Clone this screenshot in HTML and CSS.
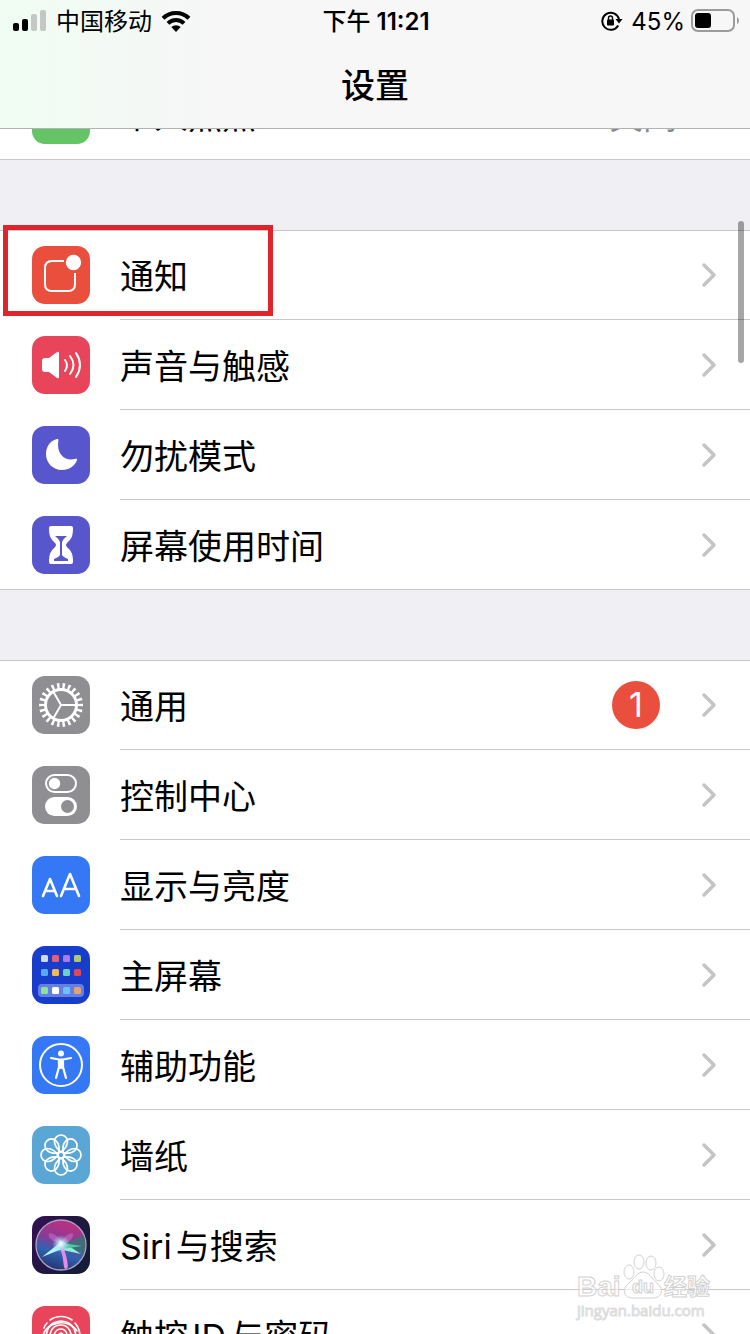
FILE: index.html
```html
<!DOCTYPE html>
<html lang="zh-CN">

<head>
    <meta charset="UTF-8">
    <meta name="viewport" content="width=device-width, initial-scale=1.0">
    <title>设置</title>
    <link rel="stylesheet" href="styles.css">
</head>

<body>
    <svg class="defs" aria-hidden="true">
        <symbol id="chevron" viewBox="0 0 16 26">
            <path d="M3 3l10 10L3 23" fill="none" stroke="#c4c4c6" stroke-width="3.500" stroke-linecap="round" stroke-linejoin="round"/>
        </symbol>
        <linearGradient id="siri-ball" x1="0.6" y1="0" x2="0.3" y2="1">
            <stop offset="0" stop-color="#c0307e"/>
            <stop offset="0.4" stop-color="#8a3a94"/>
            <stop offset="0.65" stop-color="#2f62b0"/>
            <stop offset="1" stop-color="#27306f"/>
        </linearGradient>
        <linearGradient id="siri-bg" x1="0" y1="0" x2="1" y2="0.6">
            <stop offset="0" stop-color="#351052"/>
            <stop offset="1" stop-color="#141c38"/>
        </linearGradient>
        <radialGradient id="siri-glow">
            <stop offset="0" stop-color="#fff"/>
            <stop offset="0.4" stop-color="#c9f0ff" stop-opacity="0.7"/>
            <stop offset="1" stop-color="#8fd8ff" stop-opacity="0"/>
        </radialGradient>
    </svg>

    <div class="screen">
        <header class="header">
            <div class="status-bar">
                <div class="status-left">
                    <svg width="34" height="22" viewBox="0 0 34 22">
                        <rect x="0" y="13" width="6" height="8" rx="2"/>
                        <rect x="9" y="9" width="6" height="12" rx="2"/>
                        <rect x="18" y="4" width="6" height="17" rx="2" fill="#c3c8c4"/>
                        <rect x="27" y="0" width="6" height="21" rx="2" fill="#c3c8c4"/>
                    </svg>
                    <span class="carrier">中国移动</span>
                    <svg width="30" height="22" viewBox="0 0 30 22">
                        <g fill="none" stroke="#000" stroke-width="4">
                            <path d="M2 8.2a18.6 18.6 0 0 1 26 0"/>
                            <path d="M7 13.4a11.4 11.4 0 0 1 16 0"/>
                        </g>
                        <path d="M15 22l-4.7-4.9a6.8 6.8 0 0 1 9.4 0z"/>
                    </svg>
                </div>
                <span class="time"><span class="period">下午</span> 11:21</span>
                <div class="status-right">
                    <svg width="22" height="20" viewBox="0 0 22 20">
                        <path d="M17.2 14.5A8.5 8.5 0 1 1 18 8" fill="none" stroke="#000" stroke-width="2"/>
                        <path d="M14.5 8h7l-3.5 4.5z"/>
                        <rect x="6" y="8.5" width="7" height="6" rx="1"/>
                        <path d="M7.5 9V7a2 2 0 0 1 4 0v2" fill="none" stroke="#000" stroke-width="1.4"/>
                    </svg>
                    <span class="percent">45%</span>
                    <svg width="48" height="24" viewBox="0 0 48 24">
                        <rect x="1" y="1" width="42" height="21" rx="6" fill="none" stroke="#9b9b9b" stroke-width="2"/>
                        <rect x="4" y="4" width="16" height="15" rx="3"/>
                        <path d="M46 8q2 1 2 3.500t-2 3.500z" fill="#9b9b9b"/>
                    </svg>
                </div>
            </div>
            <h1>设置</h1>
        </header>

        <main>
            <nav class="group">
                <a class="row" href="#">
                    <svg class="icon" viewBox="0 0 58 58"><rect width="58" height="58" rx="13" fill="#65c466"/></svg>
                    <span class="row-body">
                        <span class="label">个人热点</span>
                        <span class="value">关闭</span>
                        <svg class="chevron"><use href="#chevron"/></svg>
                    </span>
                </a>
            </nav>

            <nav class="group">
                <a class="row marked" href="#">
                    <svg class="icon" viewBox="0 0 58 58">
                        <rect width="58" height="58" rx="13" fill="#ea4e3d"/>
                        <path d="M32 15H20q-7 0-7 7v16q0 7 7 7h16q7 0 7-7V27" fill="none" stroke="#fff" stroke-width="2"/>
                        <circle cx="41.500" cy="16.500" r="7.700" fill="#fff"/>
                    </svg>
                    <span class="row-body">
                        <span class="label">通知</span>
                        <svg class="chevron"><use href="#chevron"/></svg>
                    </span>
                </a>
                <a class="row" href="#">
                    <svg class="icon" viewBox="0 0 58 58">
                        <rect width="58" height="58" rx="13" fill="#e8445a"/>
                        <path d="M10 25q0-3 3-3h4l8-6q2-1 2 1v24q0 2-2 1l-8-6h-4q-3 0-3-3z" fill="#fff"/>
                        <g fill="none" stroke="#fff" stroke-width="2" stroke-linecap="round">
                            <path d="M33 24q4 5 0 11"/>
                            <path d="M38 20q7 9 0 18"/>
                            <path d="M44 17q8 12 0 24"/>
                        </g>
                    </svg>
                    <span class="row-body">
                        <span class="label">声音与触感</span>
                        <svg class="chevron"><use href="#chevron"/></svg>
                    </span>
                </a>
                <a class="row" href="#">
                    <svg class="icon" viewBox="0 0 58 58">
                        <rect width="58" height="58" rx="13" fill="#5856cc"/>
                        <path d="M25 13C17 15 14 22 14 28c0 9 7 16 16 16 7 0 13-4 15-10 .4-1-.4-1.600-1.400-1.200C34 36 24 29 26.400 14.500c.2-1.200-.4-1.700-1.400-1.500z" fill="#fff"/>
                    </svg>
                    <span class="row-body">
                        <span class="label">勿扰模式</span>
                        <svg class="chevron"><use href="#chevron"/></svg>
                    </span>
                </a>
                <a class="row" href="#">
                    <svg class="icon" viewBox="0 0 58 58">
                        <rect width="58" height="58" rx="13" fill="#5856cc"/>
                        <path d="M19 10h20q2 0 2 2c0 9-2 11-6 15q-2 2 0 4c4 4 6 6 6 15q0 2-2 2H19q-2 0-2-2c0-9 2-11 6-15q2-2 0-4c-4-4-6-6-6-15q0-2 2-2z" fill="#fff"/>
                        <path d="M23 20h12q-4 3-5 6v13q1 2 6 4v2H22v-2q5-2 6-4V26q-1-3-5-6z" fill="#5856cc"/>
                    </svg>
                    <span class="row-body">
                        <span class="label">屏幕使用时间</span>
                        <svg class="chevron"><use href="#chevron"/></svg>
                    </span>
                </a>
            </nav>

            <nav class="group">
                <a class="row" href="#">
                    <svg class="icon" viewBox="0 0 58 58">
                        <rect width="58" height="58" rx="13" fill="#8e8e93"/>
                        <g fill="none" stroke="#fff">
                            <circle cx="29" cy="29" r="19" stroke-width="6" pathLength="88" stroke-dasharray="1.800 2.200" stroke-dashoffset="0.900"/>
                            <circle cx="29" cy="29" r="15.500" stroke-width="3"/>
                            <path d="M29 29h15M29 29l-7.500-13M29 29l-7.500 13" stroke-width="2"/>
                        </g>
                    </svg>
                    <span class="row-body">
                        <span class="label">通用</span>
                        <span class="badge">1</span>
                        <svg class="chevron"><use href="#chevron"/></svg>
                    </span>
                </a>
                <a class="row" href="#">
                    <svg class="icon" viewBox="0 0 58 58">
                        <rect width="58" height="58" rx="13" fill="#8e8e93"/>
                        <rect x="14" y="9" width="30" height="17" rx="8.500" fill="none" stroke="#fff" stroke-width="2"/>
                        <circle cx="22.500" cy="17.500" r="5.700" fill="#fff"/>
                        <rect x="13" y="31" width="32" height="19" rx="9.500" fill="#fff"/>
                        <circle cx="35.500" cy="40.500" r="6.500" fill="#8e8e93"/>
                    </svg>
                    <span class="row-body">
                        <span class="label">控制中心</span>
                        <svg class="chevron"><use href="#chevron"/></svg>
                    </span>
                </a>
                <a class="row" href="#">
                    <svg class="icon" viewBox="0 0 58 58">
                        <rect width="58" height="58" rx="13" fill="#3478f6"/>
                        <g fill="none" stroke="#fff" stroke-width="2.600" stroke-linecap="round" stroke-linejoin="round">
                            <path d="M11 40l7-17 7 17M13.500 35h9"/>
                            <path d="M29 40l9-22 9 22M32 33h12"/>
                        </g>
                    </svg>
                    <span class="row-body">
                        <span class="label">显示与亮度</span>
                        <svg class="chevron"><use href="#chevron"/></svg>
                    </span>
                </a>
                <a class="row" href="#">
                    <svg class="icon" viewBox="0 0 58 58">
                        <rect width="58" height="58" rx="13" fill="#183dcc"/>
                        <rect x="6" y="38" width="46" height="13" rx="4" fill="#6580e0"/>
                        <rect x="9" y="9" width="7" height="7" rx="1.500" fill="#cfd9ea"/>
                        <rect x="20" y="9" width="7" height="7" rx="1.500" fill="#e0607f"/>
                        <rect x="31" y="9" width="7" height="7" rx="1.500" fill="#a67bf5"/>
                        <rect x="42" y="9" width="7" height="7" rx="1.500" fill="#adc77a"/>
                        <rect x="9" y="23" width="7" height="7" rx="1.500" fill="#58a9f5"/>
                        <rect x="20" y="23" width="7" height="7" rx="1.500" fill="#f0b95c"/>
                        <rect x="31" y="23" width="7" height="7" rx="1.500" fill="#6fcfc4"/>
                        <rect x="42" y="23" width="7" height="7" rx="1.500" fill="#d9485c"/>
                        <rect x="9" y="41" width="7" height="7" rx="1.500" fill="#8de29b"/>
                        <rect x="20" y="41" width="7" height="7" rx="1.500" fill="#fff"/>
                        <rect x="31" y="41" width="7" height="7" rx="1.500" fill="#6dc1fa"/>
                        <rect x="42" y="41" width="7" height="7" rx="1.500" fill="#e2a273"/>
                    </svg>
                    <span class="row-body">
                        <span class="label">主屏幕</span>
                        <svg class="chevron"><use href="#chevron"/></svg>
                    </span>
                </a>
                <a class="row" href="#">
                    <svg class="icon" viewBox="0 0 58 58">
                        <rect width="58" height="58" rx="13" fill="#3478f6"/>
                        <circle cx="29" cy="29" r="21" fill="none" stroke="#fff" stroke-width="2"/>
                        <circle cx="29" cy="17.500" r="3" fill="#fff"/>
                        <g fill="none" stroke="#fff" stroke-width="2.200" stroke-linecap="round" stroke-linejoin="round">
                            <path d="M19 22l8 1.500h4l8-1.500"/>
                            <path d="M27 24v7l-3 11M31 24v7l3 11"/>
                        </g>
                        <path d="M26 23h6v9l-3 1-3-1z" fill="#fff"/>
                    </svg>
                    <span class="row-body">
                        <span class="label">辅助功能</span>
                        <svg class="chevron"><use href="#chevron"/></svg>
                    </span>
                </a>
                <a class="row" href="#">
                    <svg class="icon" viewBox="0 0 58 58">
                        <rect width="58" height="58" rx="13" fill="#5aa7d6"/>
                        <g fill="none" stroke="#fff" stroke-width="1.700">
                            <path id="petal" d="M29 26c-4-3-6.500-7-6.500-10.500a6.500 6.500 0 0 1 13 0c0 3.500-2.500 7.500-6.500 10.500z"/>
                            <use href="#petal" transform="rotate(45 29 29)"/>
                            <use href="#petal" transform="rotate(90 29 29)"/>
                            <use href="#petal" transform="rotate(135 29 29)"/>
                            <use href="#petal" transform="rotate(180 29 29)"/>
                            <use href="#petal" transform="rotate(225 29 29)"/>
                            <use href="#petal" transform="rotate(270 29 29)"/>
                            <use href="#petal" transform="rotate(315 29 29)"/>
                            <circle cx="29" cy="29" r="3.200"/>
                        </g>
                    </svg>
                    <span class="row-body">
                        <span class="label">墙纸</span>
                        <svg class="chevron"><use href="#chevron"/></svg>
                    </span>
                </a>
                <a class="row" href="#">
                    <svg class="icon" viewBox="0 0 58 58">
                        <rect width="58" height="58" rx="13" fill="url(#siri-bg)"/>
                        <circle cx="29" cy="29" r="25" fill="url(#siri-ball)" stroke="#a9a3c4" stroke-width="1.300"/>
                        <path d="M30 29l22-10q3 10-1 20z" fill="#25806f" opacity="0.700"/>
                        <path d="M28 27Q15 24 17 17q8 0 13 10 2-9 11-10 1 8-11 12z" fill="#c06fc8" opacity="0.600"/>
                        <path d="M30 25L10 41l20-8z" fill="#b4f3f7"/>
                        <path d="M28 24l21 14-23-5z" fill="#8cf0d2"/>
                        <path d="M30 27l20 3-20 3z" fill="#4fc9a4"/>
                        <path d="M29 26q6 12 7 25-3 4-4 0-1-11-4-20z" fill="#e48be4"/>
                        <circle cx="29" cy="28" r="9" fill="url(#siri-glow)"/>
                    </svg>
                    <span class="row-body">
                        <span class="label">Siri与搜索</span>
                        <svg class="chevron"><use href="#chevron"/></svg>
                    </span>
                </a>
                <a class="row" href="#">
                    <svg class="icon" viewBox="0 0 58 58">
                        <rect width="58" height="58" rx="13" fill="#e8445a"/>
                        <g fill="none" stroke="#fff" stroke-width="1.600" stroke-linecap="round">
                            <path d="M18 14a19 19 0 0 1 22 0"/>
                            <path d="M12 22q1-3 3-5M43 17q5 6 5 13"/>
                            <path d="M11 31a18 15 0 0 1 34-6"/>
                            <path d="M14 36q-1-20 15-21 15 1 15 18"/>
                            <path d="M18 38q-2-19 11-19 11 0 11 18"/>
                            <path d="M22 40q-2-17 7-17 8 0 7 18"/>
                            <path d="M26 41q-1-14 3-14 4 0 3 15"/>
                        </g>
                    </svg>
                    <span class="row-body">
                        <span class="label">触控ID与密码</span>
                        <svg class="chevron"><use href="#chevron"/></svg>
                    </span>
                </a>
            </nav>
        </main>

        <div class="scrollbar"></div>

        <svg class="watermark" width="140" height="72" viewBox="0 0 140 72">
            <g fill="#fff" fill-opacity="0.600" stroke="#d2d2d2">
                <ellipse cx="56" cy="22" rx="5" ry="7"/>
                <ellipse cx="66" cy="12" rx="5" ry="7"/>
                <ellipse cx="78" cy="13" rx="5" ry="7"/>
                <ellipse cx="86" cy="24" rx="5" ry="7"/>
                <path d="M70 22c6 0 8 6 14 11 8 7 4 15-4 15H60c-9 0-12-8-4-15 6-5 8-11 14-11z"/>
                <text class="wm-name" x="4" y="46">Bai</text>
                <text class="wm-du" x="59" y="43">du</text>
                <text class="wm-cn" x="91" y="45">经验</text>
            </g>
            <text class="wm-url" x="4" y="66">jingyan.baidu.com</text>
        </svg>
    </div>
</body>

</html>
```
FILE: styles.css
```css
*,
*::after {
    box-sizing: border-box;
}

body {
    margin: 0;
    font-family: Inter, "Noto Sans CJK SC", sans-serif;
    text-autospace: normal;
    background-color: #efeff4;
    color: #000;
}

.defs {
    position: absolute;
    width: 0;
    height: 0;
}

.screen {
    position: relative;
    height: 100vh;
    overflow: hidden;
}

/* Header */
.header {
    position: absolute;
    top: 0;
    left: 0;
    right: 0;
    z-index: 2;
    height: 129px;
    background: linear-gradient(to right, #f0fdf3, #f4f8f5 20%, #f7f7f7 32%);
    border-bottom: 1px solid #b2b2b2;
}

.status-bar {
    display: grid;
    grid-template-columns: 1fr auto 1fr;
    align-items: center;
    height: 40px;
    padding: 0 11px 0 13px;
    font-size: 24px;
    line-height: 40px;
}

.status-left,
.status-right {
    display: flex;
    align-items: center;
}

.status-left {
    gap: 9px;
}

.status-right {
    justify-content: flex-end;
    gap: 6px;
}

.carrier,
.percent,
.time {
    padding-top: 2px;
}

.percent {
    margin-left: 2px;
}

.time {
    font-weight: 600;
}

.period {
    font-weight: 500;
}

h1 {
    margin: 0;
    padding-top: 22px;
    font-size: 34px;
    font-weight: 500;
    line-height: 48px;
    text-align: center;
}

/* List */
main {
    padding-top: 70px;
}

.group {
    margin-bottom: 70px;
    background-color: #fff;
    box-shadow: inset 0 1px #c8c7cc, inset 0 -1px #c8c7cc;
}

.row {
    position: relative;
    display: flex;
    height: 90px;
    padding-left: 32px;
    color: inherit;
    text-decoration: none;
}

.icon {
    flex: none;
    width: 58px;
    height: 58px;
    margin: 16px 30px 0 0;
}

.row-body {
    flex: 1;
    display: flex;
    align-items: center;
    padding-right: 33px;
    border-bottom: 1px solid #c8c7cc;
}

.label,
.value {
    padding-top: 4px;
    font-size: 34px;
    line-height: 48px;
}

.label {
    flex: 1;
}

.value {
    margin-right: 24px;
    color: #8a8a8e;
}

.chevron {
    flex: none;
    width: 16px;
    height: 26px;
}

.badge {
    width: 48px;
    height: 48px;
    margin-right: 41px;
    border-radius: 50%;
    background-color: #ea4e3d;
    color: #fff;
    font-size: 34px;
    line-height: 48px;
    text-align: center;
}

.marked::after {
    content: "";
    position: absolute;
    top: -5px;
    left: 3px;
    width: 270px;
    height: 91px;
    border: 5px solid #e0242c;
}

/* Overlays */
.scrollbar {
    position: absolute;
    top: 221px;
    right: 6px;
    width: 6px;
    height: 142px;
    border-radius: 3px;
    background-color: rgba(0, 0, 0, 0.35);
}

.watermark {
    position: absolute;
    right: 37px;
    bottom: 12px;
}

.wm-name {
    font: bold 28px "Liberation Sans", sans-serif;
}

.wm-du {
    font: bold 18px "Liberation Sans", sans-serif;
}

.wm-cn {
    font: bold 23px "Noto Sans CJK SC", sans-serif;
}

.wm-url {
    font: 15px "Open Sans", sans-serif;
    fill: #fff;
    fill-opacity: 0.6;
    stroke: #dcdcdc;
}
```
